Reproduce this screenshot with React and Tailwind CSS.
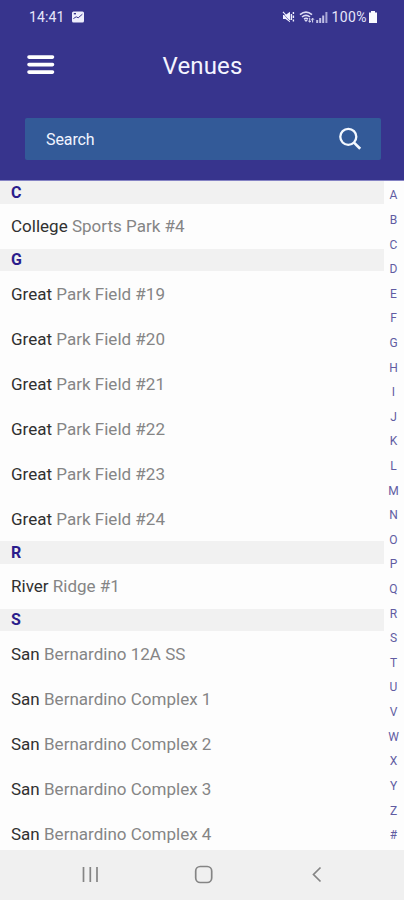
const sections = [
  { letter: 'C', venues: [['College', 'Sports Park #4']] },
  {
    letter: 'G',
    venues: [
      ['Great', 'Park Field #19'],
      ['Great', 'Park Field #20'],
      ['Great', 'Park Field #21'],
      ['Great', 'Park Field #22'],
      ['Great', 'Park Field #23'],
      ['Great', 'Park Field #24'],
    ],
  },
  { letter: 'R', venues: [['River', 'Ridge #1']] },
  {
    letter: 'S',
    venues: [
      ['San', 'Bernardino 12A SS'],
      ['San', 'Bernardino Complex 1'],
      ['San', 'Bernardino Complex 2'],
      ['San', 'Bernardino Complex 3'],
      ['San', 'Bernardino Complex 4'],
    ],
  },
];

const indexLetters = 'ABCDEFGHIJKLMNOPQRSTUVWXYZ#'.split('');

function StatusBar() {
  return (
    <div className="flex h-[34px] items-center pl-[29px] pr-[26px] text-[14px] text-[#e6e6fa]">
      <span className="pt-[1px] tracking-[0.1px]">14:41</span>
      <svg className="ml-[8px] h-[12px] w-[12px]" viewBox="0 0 12 12">
        <rect y="0.5" width="12" height="11" rx="1.5" fill="#eeeefc" />
        <path d="M1.8 2h2.2v1.4H1.8z" fill="#37348d" />
        <path d="M1.4 7.6l2.8-1.8 2 1 4.2-3.6" fill="none" stroke="#37348d" strokeWidth="1" />
      </svg>
      <svg className="ml-auto h-[14px] w-[13px]" viewBox="0 0 13 14">
        <path d="M1 5h2.5L8 1.8v10.4L3.5 9H1z" fill="#f0f0ff" />
        <path d="M0.5 3l7.5 8" stroke="#37348d" strokeWidth="0.7" />
        <path d="M1 1.8l7.2 8" stroke="#f0f0ff" strokeWidth="1.1" />
        <path d="M9.4 4v6M11.4 2v2M11.4 5.5v2.5M11.4 9.5v2" stroke="#f0f0ff" strokeWidth="1.4" />
      </svg>
      <svg className="ml-[4px] h-[14px] w-[16px]" viewBox="0 0 16 14">
        <path d="M1 4.7Q7 -0.5 13 4.7M3 7Q7 3.6 11 7M5 9Q7 7.5 9 9" fill="none" stroke="#dcdcf5" strokeWidth="1.6" />
        <path d="M7 12l-2-2.3h4z" fill="#dcdcf5" />
        <path d="M10.7 8v4M9.4 10.7l1.3 1.6 1.3-1.6M13.6 12.5v-4M12.3 9.7l1.3-1.6 1.3 1.6" fill="none" stroke="#dcdcf5" strokeWidth="1" />
      </svg>
      <svg className="ml-[1px] h-[12px] w-[12px]" viewBox="0 0 12 12">
        <path d="M1.2 9v3M4.2 7v5M7.2 4.5V12" stroke="#c2c1e6" strokeWidth="2" />
        <path d="M10.4 1v11" stroke="#a9a7d6" strokeWidth="2" />
      </svg>
      <span className="ml-[4px] pt-[1px] tracking-[0.4px]">100%</span>
      <svg className="ml-[1px] h-[12px] w-[10px]" viewBox="0 0 10 12">
        <path d="M3 0h4v1.5h2V12H1V1.5h2z" fill="#fafaff" />
      </svg>
    </div>
  );
}

function Header() {
  return (
    <header className="h-[181px] shrink-0 border-b border-[#8583c4] bg-[#37348d]">
      <StatusBar />
      <div className="grid h-[62px] grid-cols-[68px_1fr_68px] items-center">
        <svg className="ml-[27px] h-[22px] w-[28px]" viewBox="0 0 28 22">
          <path d="M2 3.1h23.5M2 10.6h23.5M2 18.1h23.5" stroke="#fff" strokeWidth="3.6" strokeLinecap="round" />
        </svg>
        <h1 className="pt-[2px] pl-[1px] text-center text-[24px] tracking-[0.15px] text-[#f4f4ff]">Venues</h1>
      </div>
      <div className="ml-[25px] mt-[22px] flex h-[42px] w-[356px] items-center justify-between rounded-[2px] bg-[#335a98] pl-[21px] pr-[19px]">
        <span className="pt-[2px] text-[16px] tracking-[-0.1px] text-[#f0f4ff]">Search</span>
        <svg className="h-[24px] w-[24px]" viewBox="0 0 24 24">
          <circle cx="10.3" cy="9.8" r="8" fill="none" stroke="#f4f8ff" strokeWidth="2.3" />
          <path d="M16 15.6l6.2 6.1" stroke="#f4f8ff" strokeWidth="2.7" />
        </svg>
      </div>
    </header>
  );
}

export default function App() {
  return (
    <div className="flex h-[900px] w-[404px] flex-col overflow-hidden bg-[#fdfdfd] font-['Roboto',sans-serif]">
      <Header />
      <main className="flex min-h-0 flex-1 overflow-hidden">
        <div className="w-[384px]">
          {sections.map((s) => (
            <section key={s.letter}>
              <h2 className="flex h-[22.5px] items-center bg-[#f1f1f1] pl-[11px] pt-[1px] text-[16px] font-bold text-[#2b1d8c]">{s.letter}</h2>
              {s.venues.map(([first, rest]) => (
                <p key={rest} className="h-[45px] whitespace-pre pl-[11px] pt-[0.8px] text-[17px] leading-[45px] tracking-[0.01px] text-[#858585]">
                  <span className="text-[#303030]">{first}</span> {rest}
                </p>
              ))}
            </section>
          ))}
        </div>
        <nav className="flex w-[20px] flex-col items-center pt-[2px] pr-[1px] text-[12px] text-[#615ca2]">
          {indexLetters.map((l) => (
            <span key={l} className="flex h-[24.62px] shrink-0 items-center">{l}</span>
          ))}
        </nav>
      </main>
      <footer className="flex h-[50px] shrink-0 bg-[#f0f0f0]">
        <svg className="h-[50px] w-[404px]" viewBox="0 0 404 50" fill="none" stroke="#858585">
          <path d="M83.5 17v15M90.3 17v15M97 17v15" strokeWidth="1.7" />
          <rect x="195.7" y="16.5" width="16" height="16" rx="4.5" strokeWidth="1.7" />
          <path d="M320.5 17.5l-7 7 7 7" strokeWidth="1.7" />
        </svg>
      </footer>
    </div>
  );
}
